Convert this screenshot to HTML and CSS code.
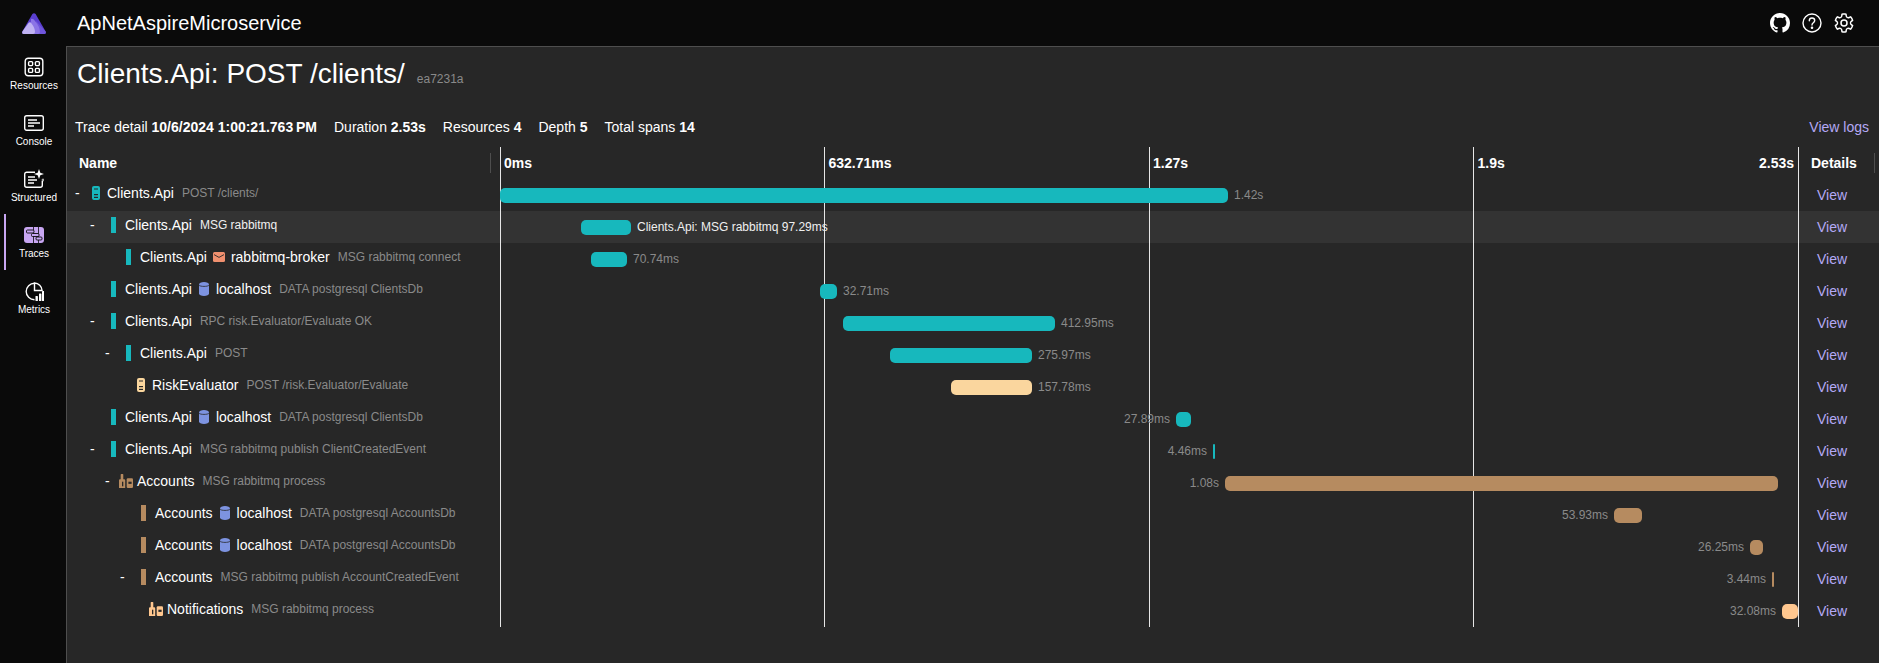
FILE: index.html
```html
<!DOCTYPE html>
<html lang="en">
<head>
    <meta charset="UTF-8">
    <title>Clients.Api: POST /clients/</title>
    <link rel="stylesheet" href="styles.css">
</head>
<body>
    <svg class="defs">
        <symbol id="server" viewBox="0 0 8 14">
            <rect width="8" height="14" rx="2" fill="currentColor"/>
            <rect x="2" y="2.5" width="4" height="1" fill="#272727"/>
            <rect x="2" y="8" width="4" height="1.2" fill="#272727"/>
            <rect x="2" y="10.8" width="4" height="1.2" fill="#272727"/>
        </symbol>
        <symbol id="multi" viewBox="0 0 14 14">
            <path d="M0 6.3a1 1 0 0 1 1-1h.7V.6a.6.6 0 0 1 .6-.6h1.4a.6.6 0 0 1 .6.6v4.7h.9a1 1 0 0 1 1 1V14H0z" fill="currentColor"/>
            <rect x="3" y="7.7" width="1.3" height="4.6" fill="#272727"/>
            <rect x="7.7" y="4.3" width="6.3" height="9.7" rx="1.2" fill="currentColor"/>
            <rect x="9.4" y="7.7" width="3.2" height="2.2" fill="#272727"/>
        </symbol>
        <symbol id="db" viewBox="0 0 10 14">
            <path d="M0 2.4C0 1 2.2 0 5 0s5 1 5 2.4v9.2C10 13 7.8 14 5 14s-5-1-5-2.4z" fill="#7d93e0"/>
            <path d="M0 3.2C1 4.8 9 4.8 10 3.2" fill="none" stroke="#272727" stroke-width=".8"/>
        </symbol>
        <symbol id="mail" viewBox="0 0 12 10">
            <rect width="12" height="10" rx="1.5" fill="#f0906f"/>
            <path d="M1 2.6 6 5.4l5-2.8" fill="none" stroke="#272727" stroke-width=".9"/>
        </symbol>
    </svg>

    <header class="topbar">
        <svg class="logo" viewBox="0 0 24 21">
            <path d="M10.4.9Q12-.6 13.6.9L23.5 18.3Q24.6 21 22 21H2Q-.6 21 .5 18.3z" fill="#5a3fd0"/>
            <path d="M14 8 23.5 18.3Q24.6 21 22 21H15z" fill="#6f55db"/>
            <path d="M9 6Q11 5 13 8 18 14 18 19 18 21 16 21H8z" fill="#8b74e6"/>
            <path d="M1.8 21Q-.6 21 .5 18.3L6.5 10Q8 8.5 9.5 10.5 13 15 13 19 13 21 11 21z" fill="#c0b2f3"/>
        </svg>
        <div class="app-name">ApNetAspireMicroservice</div>
        <div class="top-actions">
            <svg class="top-icon" viewBox="0 0 16 16"><path fill="#fff" d="M8 0C3.58 0 0 3.58 0 8c0 3.54 2.29 6.53 5.47 7.59.4.07.55-.17.55-.38 0-.19-.01-.82-.01-1.49-2.01.37-2.53-.49-2.69-.94-.09-.23-.48-.94-.82-1.13-.28-.15-.68-.52-.01-.53.63-.01 1.08.58 1.23.82.72 1.21 1.87.87 2.33.66.07-.52.28-.87.51-1.07-1.78-.2-3.64-.89-3.64-3.95 0-.87.31-1.59.82-2.15-.08-.2-.36-1.02.08-2.12 0 0 .67-.21 2.2.82.64-.18 1.32-.27 2-.27.68 0 1.36.09 2 .27 1.53-1.04 2.2-.82 2.2-.82.44 1.1.16 1.92.08 2.12.51.56.82 1.27.82 2.15 0 3.07-1.87 3.75-3.65 3.95.29.25.54.73.54 1.48 0 1.07-.01 1.93-.01 2.2 0 .21.15.46.55.38A8.013 8.013 0 0016 8c0-4.42-3.58-8-8-8z"/></svg>
            <svg class="top-icon" viewBox="0 0 20 20" fill="none" stroke="#fff" stroke-width="1.4"><circle cx="10" cy="10" r="9"/><path d="M7.3 7.7C7.3 6.1 8.5 5 10 5s2.7 1.1 2.7 2.6c0 2.2-2.7 2.2-2.7 4.4" stroke-linecap="round"/><circle cx="10" cy="14.8" r=".6" fill="#fff"/></svg>
            <svg class="top-icon" viewBox="2 2 20 20"><path fill="#fff" d="M12.012 2.25c.734.008 1.465.093 2.182.253a.75.75 0 0 1 .582.649l.17 1.527a1.384 1.384 0 0 0 1.927 1.116l1.401-.615a.75.75 0 0 1 .85.174 9.792 9.792 0 0 1 2.204 3.792.75.75 0 0 1-.271.825l-1.242.916a1.381 1.381 0 0 0 0 2.226l1.243.915a.75.75 0 0 1 .272.826 9.797 9.797 0 0 1-2.204 3.792.75.75 0 0 1-.848.175l-1.407-.617a1.38 1.38 0 0 0-1.926 1.114l-.169 1.526a.75.75 0 0 1-.572.647 9.518 9.518 0 0 1-4.406 0 .75.75 0 0 1-.572-.647l-.168-1.524a1.382 1.382 0 0 0-1.926-1.11l-1.406.616a.75.75 0 0 1-.849-.175 9.798 9.798 0 0 1-2.204-3.796.75.75 0 0 1 .272-.826l1.243-.916a1.38 1.38 0 0 0 0-2.226l-1.243-.914a.75.75 0 0 1-.271-.826 9.793 9.793 0 0 1 2.204-3.792.75.75 0 0 1 .85-.174l1.4.615a1.387 1.387 0 0 0 1.93-1.118l.17-1.526a.75.75 0 0 1 .583-.65c.717-.159 1.45-.243 2.201-.252Zm0 1.5a9.135 9.135 0 0 0-1.354.117l-.109.977A2.886 2.886 0 0 1 6.525 7.17l-.898-.394a8.293 8.293 0 0 0-1.348 2.317l.798.587a2.881 2.881 0 0 1 0 4.643l-.799.588c.32.842.776 1.626 1.348 2.322l.905-.397a2.882 2.882 0 0 1 4.017 2.318l.11.984c.889.15 1.798.15 2.687 0l.11-.984a2.881 2.881 0 0 1 4.018-2.322l.905.396a8.296 8.296 0 0 0 1.347-2.318l-.798-.588a2.881 2.881 0 0 1 0-4.643l.796-.587a8.293 8.293 0 0 0-1.348-2.317l-.896.393a2.884 2.884 0 0 1-4.023-2.324l-.11-.976a8.988 8.988 0 0 0-1.333-.117ZM12 8.25a3.75 3.75 0 1 1 0 7.5 3.75 3.75 0 0 1 0-7.5Zm0 1.5a2.25 2.25 0 1 0 0 4.5 2.25 2.25 0 0 0 0-4.5Z"/></svg>
        </div>
    </header>

    <div class="layout">
        <nav class="sidebar">
            <a class="nav-item">
                <svg class="nav-icon" viewBox="0 0 20 20" fill="none" stroke="#fff" stroke-width="1.4"><rect x="1.2" y="1.2" width="17.6" height="17.6" rx="3"/><rect x="4.6" y="4.6" width="4" height="4" rx="1"/><rect x="11.4" y="4.6" width="4" height="4" rx="1"/><rect x="4.6" y="11.4" width="4" height="4" rx="1"/><rect x="11.4" y="11.4" width="4" height="4" rx="1"/></svg>
                <span>Resources</span>
            </a>
            <a class="nav-item">
                <svg class="nav-icon" viewBox="0 0 20 20" fill="none" stroke="#fff" stroke-width="1.4"><rect x=".7" y="2.7" width="18.6" height="14.6" rx="2"/><path d="M4 7h9M4 10h12M4 13h6"/></svg>
                <span>Console</span>
            </a>
            <a class="nav-item">
                <svg class="nav-icon" viewBox="0 0 20 20" fill="none" stroke="#fff" stroke-width="1.4"><path d="M11 3.2H2.7a2 2 0 0 0-2 2v11a2 2 0 0 0 2 2h13.6a2 2 0 0 0 2-2V12"/><path d="M4 8h7M4 11h9M4 14h6"/><path d="M15 0l1.3 3.7L20 5l-3.7 1.3L15 10l-1.3-3.7L10 5l3.7-1.3z" fill="#fff" stroke="none"/><path d="M19 9l.5 1.5 1.5.5-1.5.5L19 13l-.5-1.5L17 11l1.5-.5z" fill="#fff" stroke="none"/></svg>
                <span>Structured</span>
            </a>
            <a class="nav-item active">
                <svg class="nav-icon" viewBox="0 0 20 20"><rect y="2" width="20" height="16" rx="3" fill="#c8a6f2"/><path d="M9.5 2v16M14.5 2v16" stroke="#0a0a0a" stroke-width=".8"/><rect x="2.5" y="5" width="7.5" height="3" rx="1" fill="#c8a6f2" stroke="#0a0a0a" stroke-width=".9"/><rect x="7.5" y="8.5" width="7.5" height="3" rx="1" fill="#c8a6f2" stroke="#0a0a0a" stroke-width=".9"/><rect x="12" y="12" width="6" height="3" rx="1" fill="#c8a6f2" stroke="#0a0a0a" stroke-width=".9"/></svg>
                <span>Traces</span>
            </a>
            <a class="nav-item">
                <svg class="nav-icon" viewBox="0 0 20 20"><path d="M10.5 2.2a8.3 8.3 0 1 0 0 16.6" fill="none" stroke="#fff" stroke-width="1.4"/><path d="M10.5 2v7.5h7.6A8 8 0 0 0 10.5 2z" fill="none" stroke="#fff" stroke-width="1.4"/><rect x="11.5" y="15" width="2.4" height="5" rx=".6" fill="#fff"/><rect x="15" y="12.5" width="2.4" height="7.5" rx=".6" fill="#fff"/><rect x="18" y="10" width="2.4" height="10" rx=".6" fill="#fff"/></svg>
                <span>Metrics</span>
            </a>
        </nav>

        <main class="content">
            <div class="title-row">
                <h1>Clients.Api: POST /clients/</h1>
                <span class="trace-id">ea7231a</span>
            </div>

            <div class="summary">
                <span>Trace detail <b>10/6/2024 1:00:21.763&#8239;PM</b></span>
                <span>Duration <b>2.53s</b></span>
                <span>Resources <b>4</b></span>
                <span>Depth <b>5</b></span>
                <span>Total spans <b>14</b></span>
                <a class="link view-logs">View logs</a>
            </div>

            <div class="trace-table">
                <div class="gridlines"><i></i><i></i><i></i><i></i><i></i></div>

                <div class="row head">
                    <div class="name-head">Name</div>
                    <div class="ticks">
                        <span>0ms</span>
                        <span>632.71ms</span>
                        <span>1.27s</span>
                        <span class="last-tick"><span>1.9s</span><span>2.53s</span></span>
                    </div>
                    <div class="details-head">Details</div>
                </div>

                <div class="row">
                    <div class="name-cell depth-0"><span class="toggle">-</span><svg class="server teal"><use href="#server"/></svg><span class="svc">Clients.Api</span><span class="op">POST /clients/</span></div>
                    <div class="track"><div class="bar teal-bg" style="margin-left:0;width:728px"></div><span class="dur">1.42s</span></div>
                    <a class="link view">View</a>
                </div>
                <div class="row selected">
                    <div class="name-cell depth-1"><span class="toggle">-</span><i class="tick teal-bg"></i><span class="svc">Clients.Api</span><span class="op">MSG rabbitmq</span></div>
                    <div class="track"><div class="bar teal-bg" style="margin-left:81px;width:50px"></div><span class="dur">Clients.Api: MSG rabbitmq 97.29ms</span></div>
                    <a class="link view">View</a>
                </div>
                <div class="row">
                    <div class="name-cell depth-2"><span class="toggle"></span><i class="tick teal-bg"></i><span class="svc">Clients.Api</span><svg class="mail"><use href="#mail"/></svg><span class="svc">rabbitmq-broker</span><span class="op">MSG rabbitmq connect</span></div>
                    <div class="track"><div class="bar teal-bg" style="margin-left:91px;width:36px"></div><span class="dur">70.74ms</span></div>
                    <a class="link view">View</a>
                </div>
                <div class="row">
                    <div class="name-cell depth-1"><span class="toggle"></span><i class="tick teal-bg"></i><span class="svc">Clients.Api</span><svg class="db"><use href="#db"/></svg><span class="svc">localhost</span><span class="op">DATA postgresql ClientsDb</span></div>
                    <div class="track"><div class="bar teal-bg" style="margin-left:320px;width:17px"></div><span class="dur">32.71ms</span></div>
                    <a class="link view">View</a>
                </div>
                <div class="row">
                    <div class="name-cell depth-1"><span class="toggle">-</span><i class="tick teal-bg"></i><span class="svc">Clients.Api</span><span class="op">RPC risk.Evaluator/Evaluate OK</span></div>
                    <div class="track"><div class="bar teal-bg" style="margin-left:343px;width:212px"></div><span class="dur">412.95ms</span></div>
                    <a class="link view">View</a>
                </div>
                <div class="row">
                    <div class="name-cell depth-2"><span class="toggle">-</span><i class="tick teal-bg"></i><span class="svc">Clients.Api</span><span class="op">POST</span></div>
                    <div class="track"><div class="bar teal-bg" style="margin-left:390px;width:142px"></div><span class="dur">275.97ms</span></div>
                    <a class="link view">View</a>
                </div>
                <div class="row">
                    <div class="name-cell depth-3"><span class="toggle"></span><svg class="server yellow"><use href="#server"/></svg><span class="svc">RiskEvaluator</span><span class="op">POST /risk.Evaluator/Evaluate</span></div>
                    <div class="track"><div class="bar yellow-bg" style="margin-left:451px;width:81px"></div><span class="dur">157.78ms</span></div>
                    <a class="link view">View</a>
                </div>
                <div class="row">
                    <div class="name-cell depth-1"><span class="toggle"></span><i class="tick teal-bg"></i><span class="svc">Clients.Api</span><svg class="db"><use href="#db"/></svg><span class="svc">localhost</span><span class="op">DATA postgresql ClientsDb</span></div>
                    <div class="track to-end"><span class="dur">27.89ms</span><div class="bar teal-bg" style="margin-right:607px;width:15px"></div></div>
                    <a class="link view">View</a>
                </div>
                <div class="row">
                    <div class="name-cell depth-1"><span class="toggle">-</span><i class="tick teal-bg"></i><span class="svc">Clients.Api</span><span class="op">MSG rabbitmq publish ClientCreatedEvent</span></div>
                    <div class="track to-end"><span class="dur">4.46ms</span><div class="bar teal-bg" style="margin-right:583px;width:2px"></div></div>
                    <a class="link view">View</a>
                </div>
                <div class="row">
                    <div class="name-cell depth-2"><span class="toggle">-</span><svg class="multi brown"><use href="#multi"/></svg><span class="svc">Accounts</span><span class="op">MSG rabbitmq process</span></div>
                    <div class="track to-end"><span class="dur">1.08s</span><div class="bar brown-bg" style="margin-right:20px;width:553px"></div></div>
                    <a class="link view">View</a>
                </div>
                <div class="row">
                    <div class="name-cell depth-3"><span class="toggle"></span><i class="tick brown-bg"></i><span class="svc">Accounts</span><svg class="db"><use href="#db"/></svg><span class="svc">localhost</span><span class="op">DATA postgresql AccountsDb</span></div>
                    <div class="track to-end"><span class="dur">53.93ms</span><div class="bar brown-bg" style="margin-right:156px;width:28px"></div></div>
                    <a class="link view">View</a>
                </div>
                <div class="row">
                    <div class="name-cell depth-3"><span class="toggle"></span><i class="tick brown-bg"></i><span class="svc">Accounts</span><svg class="db"><use href="#db"/></svg><span class="svc">localhost</span><span class="op">DATA postgresql AccountsDb</span></div>
                    <div class="track to-end"><span class="dur">26.25ms</span><div class="bar brown-bg" style="margin-right:35px;width:13px"></div></div>
                    <a class="link view">View</a>
                </div>
                <div class="row">
                    <div class="name-cell depth-3"><span class="toggle">-</span><i class="tick brown-bg"></i><span class="svc">Accounts</span><span class="op">MSG rabbitmq publish AccountCreatedEvent</span></div>
                    <div class="track to-end"><span class="dur">3.44ms</span><div class="bar brown-bg" style="margin-right:24px;width:2px"></div></div>
                    <a class="link view">View</a>
                </div>
                <div class="row">
                    <div class="name-cell depth-4"><span class="toggle"></span><svg class="multi peach"><use href="#multi"/></svg><span class="svc">Notifications</span><span class="op">MSG rabbitmq process</span></div>
                    <div class="track to-end"><span class="dur">32.08ms</span><div class="bar peach-bg" style="margin-right:0;width:16px"></div></div>
                    <a class="link view">View</a>
                </div>
            </div>
        </main>
    </div>
</body>
</html>
```
FILE: styles.css
```css
* {
    box-sizing: border-box;
}

body {
    margin: 0;
    height: 100vh;
    display: flex;
    flex-direction: column;
    overflow: hidden;
    background-color: #0a0a0a;
    color: #fff;
    font-family: "Liberation Sans", Arial, sans-serif;
    font-size: 14px;
}

.defs {
    display: none;
}

/* top bar */
.topbar {
    height: 46px;
    flex-shrink: 0;
    display: flex;
    align-items: center;
}

.logo {
    width: 24px;
    height: 21px;
    margin-left: 22px;
}

.app-name {
    margin-left: 31px;
    font-size: 20px;
}

.top-actions {
    margin-left: auto;
    margin-right: 25px;
    display: flex;
    gap: 12px;
}

.top-icon {
    width: 20px;
    height: 20px;
}

/* left nav */
.layout {
    flex: 1;
    display: flex;
    min-height: 0;
}

.sidebar {
    width: 66px;
    flex-shrink: 0;
    padding-left: 2px;
}

.nav-item {
    position: relative;
    height: 56px;
    padding-top: 11px;
    display: flex;
    flex-direction: column;
    align-items: center;
    font-size: 10px;
}

.nav-item.active::before {
    content: "";
    position: absolute;
    left: 2px;
    top: 0;
    bottom: 0;
    width: 2px;
    background-color: #c8a6f2;
}

.nav-icon {
    width: 20px;
    height: 20px;
    margin-bottom: 3px;
}

/* main panel */
.content {
    flex: 1;
    min-width: 0;
    background-color: #272727;
    border-left: 1px solid #4e4e4e;
    border-top: 1px solid #4e4e4e;
}

.title-row {
    padding: 10px 0 0 10px;
    display: flex;
    align-items: baseline;
    gap: 12px;
}

h1 {
    margin: 0;
    font-size: 28px;
    font-weight: normal;
    line-height: 34px;
}

.trace-id {
    font-size: 12px;
    color: #8a8a8a;
}

.summary {
    margin-top: 26px;
    padding: 0 10px 0 8px;
    display: flex;
    gap: 17px;
    line-height: 20px;
}

.view-logs {
    margin-left: auto;
}

.link {
    color: #b4a9f5;
}

/* trace grid */
.trace-table {
    position: relative;
    margin-top: 10px;
}

/* the .9 keeps the lines snapping onto 824 and 1473 like the real page */
.gridlines {
    position: absolute;
    left: 432.9px;
    top: 0;
    bottom: 0;
    width: 1299px;
    display: flex;
    justify-content: space-between;
}

.gridlines i {
    width: 1px;
    background-color: #e6e6e6;
}

.row {
    position: relative;
    height: 32px;
    display: grid;
    grid-template-columns: 433px 1298px 1fr;
    align-items: center;
}

.row.selected {
    background-color: rgba(255, 255, 255, 0.06);
}

.head {
    font-weight: bold;
}

.name-head {
    padding-left: 12px;
    height: 20px;
    line-height: 20px;
    border-right: 1px solid #4e4e4e;
    margin-right: 9px;
}

.ticks {
    display: flex;
}

.ticks > span {
    width: 25%;
    flex: none;
    padding-left: 4px;
}

.last-tick {
    display: flex;
    justify-content: space-between;
    padding-right: 4px;
}

.details-head {
    padding-left: 13px;
    height: 20px;
    line-height: 20px;
    margin-right: 4px;
    border-right: 1px solid #4e4e4e;
}

.name-cell {
    display: flex;
    align-items: center;
    white-space: nowrap;
    padding-bottom: 4px;
}

.depth-0 { padding-left: 8px; }
.depth-1 { padding-left: 23px; }
.depth-2 { padding-left: 38px; }
.depth-3 { padding-left: 53px; }
.depth-4 { padding-left: 68px; }

.toggle {
    width: 14px;
    flex-shrink: 0;
}

.tick {
    width: 5px;
    height: 16px;
    margin-left: 7px;
    margin-right: 9px;
}

.server {
    width: 8px;
    height: 14px;
    margin-left: 3px;
    margin-right: 7px;
}

.multi {
    width: 14px;
    height: 14px;
    margin-right: 4px;
}

.db {
    width: 10px;
    height: 14px;
    margin: 0 7px;
}

.mail {
    width: 12px;
    height: 10px;
    margin: 0 6px;
}

.op {
    margin-left: 8px;
    font-size: 12px;
    color: #8a8a8a;
}

.selected .op,
.selected .dur {
    color: #f0f0f0;
}

/* bars */
.track {
    display: flex;
    align-items: center;
}

.track.to-end {
    justify-content: flex-end;
}

.bar {
    height: 15px;
    border-radius: 5px;
    flex-shrink: 0;
}

.dur {
    margin: 0 6px;
    font-size: 12px;
    color: #8a8a8a;
    white-space: nowrap;
}

.view {
    padding-left: 19px;
}

.teal { color: #17b8bd; }
.yellow { color: #fad69e; }
.brown { color: #b68b60; }
.peach { color: #ffc78f; }
.teal-bg { background-color: #17b8bd; }
.yellow-bg { background-color: #fad69e; }
.brown-bg { background-color: #b68b60; }
.peach-bg { background-color: #ffc78f; }
```
